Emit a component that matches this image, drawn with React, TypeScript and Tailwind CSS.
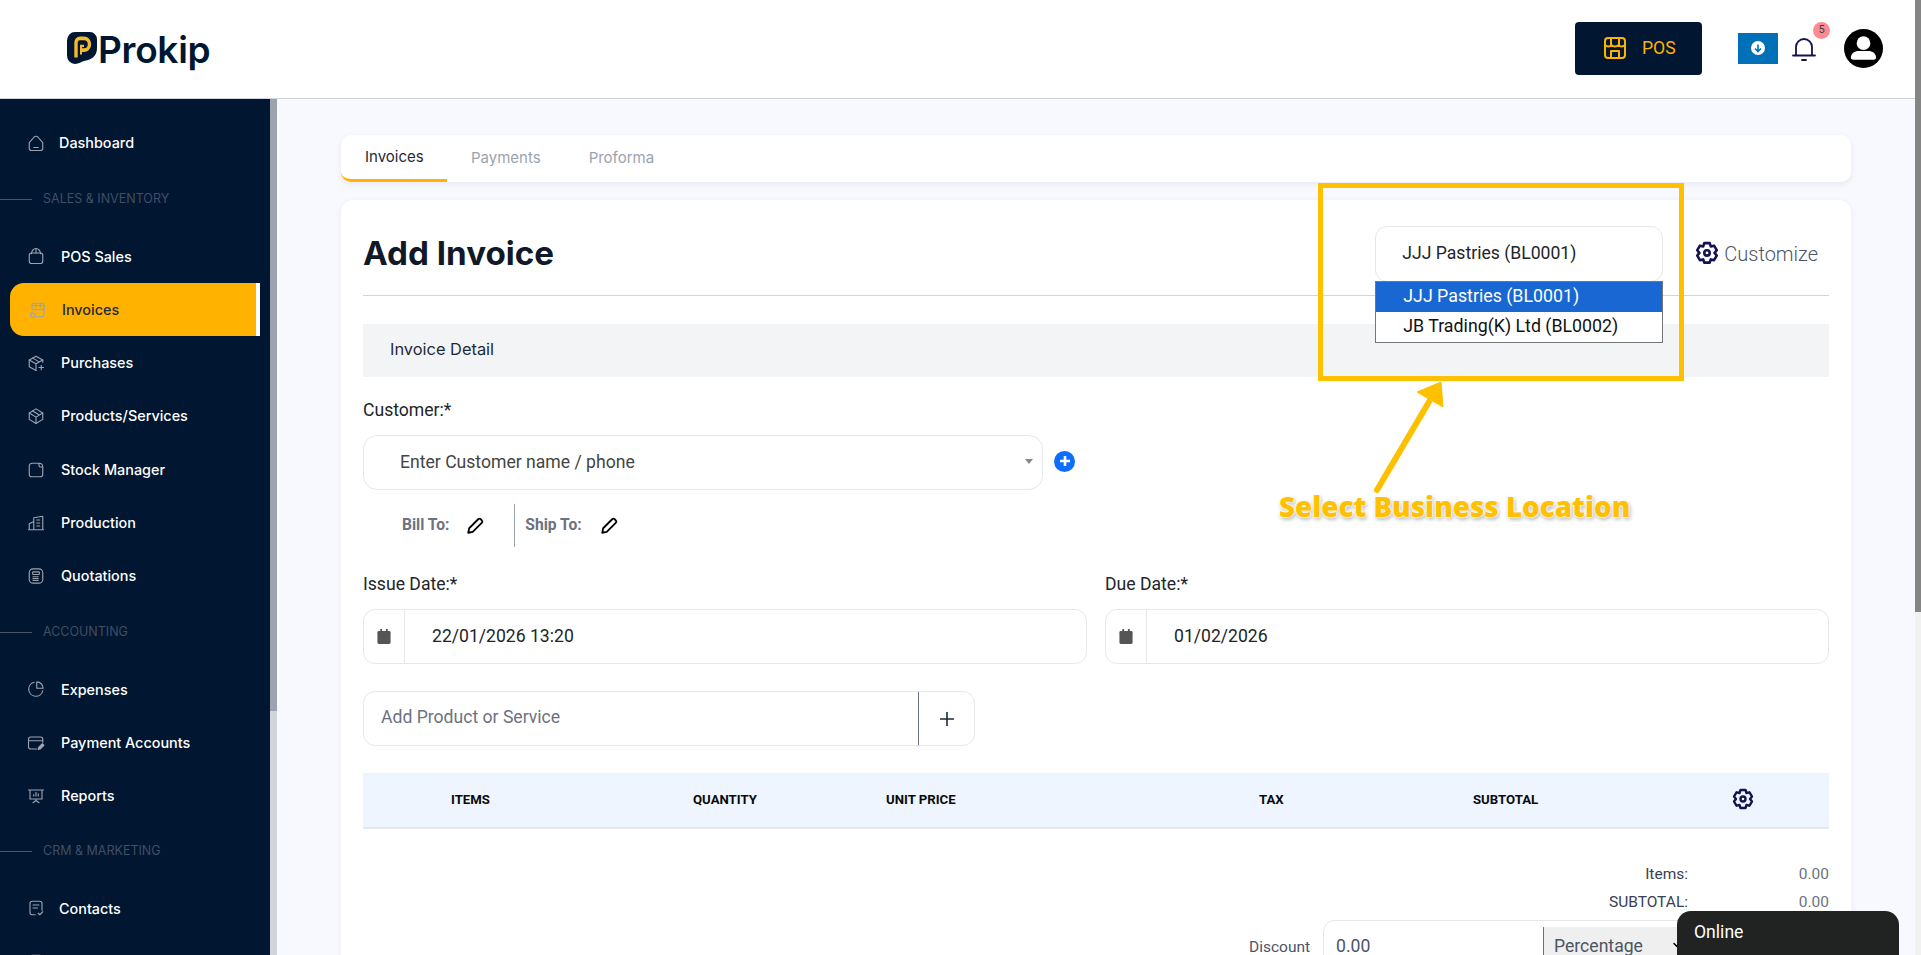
import type { ReactNode } from 'react';
import { ChevronDown } from 'lucide-react';

const line = 'fill-none stroke-current stroke-[1.5]';

function Glyph({ children, className = '' }: { children: ReactNode; className?: string }) {
  return (
    <svg viewBox="0 0 24 24" className={`h-[18px] w-[18px] shrink-0 ${line} ${className}`} strokeLinecap="round" strokeLinejoin="round">
      {children}
    </svg>
  );
}

const icons: Record<string, ReactNode> = {
  home: (
    <>
      <path d="M3 11.5 9.5 4a3.5 3.5 0 0 1 5 0L21 11.5V19a3 3 0 0 1-3 3H6a3 3 0 0 1-3-3z" />
      <path d="M9 18h6" />
    </>
  ),
  bag: (
    <>
      <path d="M3 11a3 3 0 0 1 3-3h12a3 3 0 0 1 3 3v8a3 3 0 0 1-3 3H6a3 3 0 0 1-3-3z" />
      <path d="M6 9c0-4 3-7 6-7s6 3 6 7" />
      <path d="M12 2v6" />
    </>
  ),
  shop: (
    <>
      <path d="M4 6a3 3 0 0 1 3-3h10a3 3 0 0 1 3 3v12a3 3 0 0 1-3 3H9" />
      <path d="M4 9V6h16v4a2.5 2.5 0 0 1-4 1 2.5 2.5 0 0 1-4 0 2.5 2.5 0 0 1-4 0 2.5 2.5 0 0 1-4-1" />
      <path d="M9 3v6M15 3v6M4 14v2" />
      <circle cx="5" cy="19" r="3" />
    </>
  ),
  boxPlus: (
    <>
      <path d="M21 11V8l-9-5-9 5v9l9 5" />
      <path d="M3 8l9 5 9-5M12 13v9M7.5 5.5l9 5" />
      <path d="M19 15v6M16 18h6" />
    </>
  ),
  box: (
    <>
      <path d="M21 8v8.5L12 22l-9-5.5V8l9-5.5z" />
      <path d="M3 8l9 5.5L21 8M12 13.5V22M7.5 5.2l9 5.5" />
    </>
  ),
  folder: <path d="M3 7a4 4 0 0 1 4-4h9v3a2 2 0 0 0 2 2h3v10a3 3 0 0 1-3 3H6a3 3 0 0 1-3-3z M16 3c3 0 5 2 5 5" />,
  building: (
    <>
      <path d="M2 21h20M3 21v-8l6-3M9 21V5l12-2v18" />
      <path d="M13 8h4M13 12h4M13 16h4" />
    </>
  ),
  calc: (
    <>
      <rect x="3" y="2.5" width="18" height="19" rx="5" />
      <rect x="7.5" y="6.5" width="9" height="3.5" rx="1" />
      <path d="M8 13h8M8 15.5h8M8 18h8" strokeDasharray="1.5 1.2" />
    </>
  ),
  pie: (
    <>
      <path d="M21 14.5A9.5 9.5 0 1 1 9.5 3" />
      <path d="M13 2.5a8.5 8.5 0 0 1 8.5 8.5H13z" />
    </>
  ),
  card: (
    <>
      <path d="M21 11V7a3 3 0 0 0-3-3H5a3 3 0 0 0-3 3v10a3 3 0 0 0 3 3h8" />
      <path d="M2 9h19" />
      <path d="M15 20.5l.5-2.5 5-5 2 2-5 5z" className="fill-current" />
    </>
  ),
  report: (
    <>
      <path d="M2 4h20M4 4v12h16V4M12 16v2M8 21l4-3 4 3" />
      <path d="M9 12v-2M12 12V7M15 12V9" />
    </>
  ),
  note: (
    <>
      <path d="M11 21H7a3 3 0 0 1-3-3V6a3 3 0 0 1 3-3h10a3 3 0 0 1 3 3v9" />
      <path d="M8 8h8M8 12h6M15 19l2 2 4-4" />
    </>
  ),
};

type NavRow =
  | { kind: 'link'; label: string; icon: string; gap: string }
  | { kind: 'section'; label: string; height: string };

const navRows: NavRow[] = [
  { kind: 'link', label: 'Dashboard', icon: 'home', gap: 'ml-[14px]' },
  { kind: 'section', label: 'SALES & INVENTORY', height: 'h-[60px]' },
  { kind: 'link', label: 'POS Sales', icon: 'bag', gap: 'ml-[16px]' },
  { kind: 'link', label: 'Invoices', icon: 'shop', gap: 'ml-[15px]' },
  { kind: 'link', label: 'Purchases', icon: 'boxPlus', gap: 'ml-[16px]' },
  { kind: 'link', label: 'Products/Services', icon: 'box', gap: 'ml-[16px]' },
  { kind: 'link', label: 'Stock Manager', icon: 'folder', gap: 'ml-[16px]' },
  { kind: 'link', label: 'Production', icon: 'building', gap: 'ml-[16px]' },
  { kind: 'link', label: 'Quotations', icon: 'calc', gap: 'ml-[16px]' },
  { kind: 'section', label: 'ACCOUNTING', height: 'h-[60px]' },
  { kind: 'link', label: 'Expenses', icon: 'pie', gap: 'ml-[16px]' },
  { kind: 'link', label: 'Payment Accounts', icon: 'card', gap: 'ml-[16px]' },
  { kind: 'link', label: 'Reports', icon: 'report', gap: 'ml-[16px]' },
  { kind: 'section', label: 'CRM & MARKETING', height: 'h-[59px]' },
  { kind: 'link', label: 'Contacts', icon: 'note', gap: 'ml-[14px]' },
  { kind: 'link', label: '', icon: 'note', gap: 'ml-[14px]' },
];

function Sidebar() {
  return (
    <aside className="w-[270px] shrink-0 overflow-hidden bg-[#001631] pt-[17.4px]">
      {navRows.map((row) =>
        row.kind === 'section' ? (
          <div key={row.label} className={`flex ${row.height} items-center gap-[11px] pb-[1px]`}>
            <span className="h-px w-[32px] bg-[#4b5563]" />
            <span className="text-[12.5px] text-[#414e63]">{row.label}</span>
          </div>
        ) : row.label === 'Invoices' ? (
          <div key={row.label} className="ml-[10px] flex h-[53.3px] w-[250px] items-center rounded-l-[14px] border-r-4 border-white bg-[#ffb300] pl-[19px]">
            <Glyph className="text-[#9ca3af]">{icons[row.icon]}</Glyph>
            <span className={`${row.gap} text-[14.4px] font-medium text-[#1f2937]`}>{row.label}</span>
          </div>
        ) : (
          <div key={row.label} className="flex h-[53.3px] items-center pl-[27px]">
            <Glyph className="text-[#9ca3af]">{icons[row.icon]}</Glyph>
            <span className={`${row.gap} text-[14.4px] font-medium text-white`}>{row.label}</span>
          </div>
        ),
      )}
    </aside>
  );
}

function Header() {
  return (
    <header className="flex h-[99px] shrink-0 items-center border-b border-[#d1d5db] bg-white pb-[2px] pl-[67px] pr-[32px]">
      <svg viewBox="0 0 30 30" preserveAspectRatio="none" className="h-[32px] w-[30px]">
        <path d="M8 0h15a7 7 0 0 1 7 7v8c0 8-6 11-12 12-4 .8-6 3-10 3a8 8 0 0 1-8-8V8a8 8 0 0 1 8-8z" fill="#001631" />
        <path d="M9 24V10a4 4 0 0 1 4-4h4a5.5 5.5 0 0 1 0 11h-3" fill="none" stroke="#f5b82e" strokeWidth="3.4" />
        <path d="M14 21v-8h3" fill="none" stroke="#f5b82e" strokeWidth="2" />
      </svg>
      <span className="ml-[1px] mt-[3px] font-['Inter'] text-[37px] font-semibold tracking-[-0.3px] text-[#001631]">Prokip</span>

      <button className="ml-auto flex h-[53px] w-[127px] items-center rounded-[4px] bg-[#001631] pl-[28px] font-['Roboto'] text-[17.6px] text-[#ffb300]">
        <svg viewBox="0 0 24 24" className="h-[24px] w-[24px] fill-none stroke-current stroke-2" strokeLinejoin="round">
          <rect x="2" y="2" width="20" height="20" rx="3" />
          <path d="M2 9c2 2 5 2 6.500 0 1.500 2 5.500 2 7 0 1.500 2 4.500 2 6.500 0" />
          <path d="M8 3v6M16 3v6M8 22v-7h8v7" />
        </svg>
        <span className="ml-[15px]">POS</span>
      </button>

      <div className="ml-[36px] flex h-[31px] w-[40px] items-center justify-center bg-[#0071b8]">
        <span className="flex h-[14px] w-[14px] items-center justify-center rounded-full bg-white">
          <svg viewBox="0 0 10 10" className="h-[10px] w-[10px] fill-none stroke-[#0071b8] stroke-[1.6]">
            <path d="M5 1.500v6.500M2 5.500l3 3 3-3" />
          </svg>
        </span>
      </div>

      <div className="relative ml-[14px] h-[24px] w-[24px]">
        <svg viewBox="0 0 24 24" className="h-[26px] w-[24px] fill-none stroke-[#14124f] stroke-[1.8]" strokeLinecap="round">
          <path d="M1 18.500h22M4 18.500V10a8 8 0 0 1 16 0v8.500" />
          <path d="M10 23h4" />
        </svg>
        <span className="absolute left-[21px] top-[-14px] flex h-[17px] w-[17px] items-center justify-center rounded-full bg-[#ff8a8f] font-['Roboto'] text-[11px] text-[#374151]">
          5
        </span>
      </div>

      <svg viewBox="0 0 40 40" className="ml-[28px] h-[39px] w-[39px]">
        <circle cx="20" cy="20" r="20" fill="#000" />
        <circle cx="20" cy="14.500" r="7" fill="#fff" />
        <path d="M7 30c0-5 4-7.500 8-7.500h10c4 0 8 2.500 8 7.500a3 3 0 0 1-3 1.500H10A3 3 0 0 1 7 30z" fill="#fff" />
      </svg>
    </header>
  );
}

function Gear({ className }: { className: string }) {
  return (
    <svg viewBox="0 0 24 24" className={`fill-none stroke-[#14124f] stroke-[2.4] ${className}`} strokeLinejoin="round">
      <path d="M9.500 2h5l1 3 3-.7 2.500 4.200-2 2.500 2 2.500-2.500 4.200-3-.7-1 3h-5l-1-3-3 .7L3 13.500 5 11 3 8.500l2.500-4.200 3 .7z" />
      <circle cx="12" cy="11" r="2.500" />
    </svg>
  );
}

function Pencil() {
  return (
    <svg viewBox="0 0 20 20" className="h-[18px] w-[18px] fill-none stroke-black stroke-2" strokeLinejoin="round">
      <path d="M2.500 17.500l1-5L13.500 2.500a2 2 0 0 1 2.800 0l1.200 1.200a2 2 0 0 1 0 2.800L7.500 16.500z" />
    </svg>
  );
}

function Calendar() {
  return (
    <svg viewBox="0 0 14 16" className="h-[15px] w-[14px] fill-[#555]">
      <rect x="3" y="0" width="2" height="4" />
      <rect x="9" y="0" width="2" height="4" />
      <rect x="0" y="2" width="14" height="14" rx="1.500" />
    </svg>
  );
}

function DateField({ label, value }: { label: string; value: string }) {
  return (
    <div className="min-w-0 flex-1">
      <div className="h-[24px] text-[17.6px] leading-[24px] text-[#212529]">{label}</div>
      <div className="mt-[13px] flex h-[55px] overflow-hidden rounded-[12px] border border-[#e5e7eb]">
        <div className="flex w-[41px] items-center justify-center border-r border-[#e5e7eb]">
          <Calendar />
        </div>
        <div className="flex items-center pl-[27px] text-[17.6px] text-[#212529]">{value}</div>
      </div>
    </div>
  );
}

function InvoiceCard() {
  return (
    <section className="rounded-t-[12px] bg-white px-[22px] font-['Roboto'] shadow-[0_1px_6px_rgba(30,41,80,0.06)]">
      <div className="flex h-[96px] items-center border-b border-[#d4d4d4] pt-[12px]">
        <h1 className="font-['Inter'] text-[33.2px] font-bold text-[#111827]">Add Invoice</h1>
        <div className="relative ml-auto h-[56px] w-[288px] rounded-[12px] border border-[#e5e7eb] bg-white">
          <div className="flex h-full items-center pl-[26px] text-[17.6px] text-[#212529]">JJJ Pastries (BL0001)</div>
          <ul className="absolute left-[-1px] top-[54px] z-10 w-[288px] border border-[#767676] bg-white text-[17.8px] text-[#111]">
            <li className="flex h-[30px] items-center bg-[#1967d2] pl-[27px] text-white">JJJ Pastries (BL0001)</li>
            <li className="flex h-[30px] items-center pl-[27px]">JB Trading(K) Ltd (BL0002)</li>
          </ul>
        </div>
        <div className="ml-[31px] flex items-center pr-[11px]">
          <Gear className="h-[26px] w-[26px]" />
          <span className="ml-[4px] text-[20px] font-light text-[#4b5563]">Customize</span>
        </div>
      </div>

      <div className="mt-[28px] flex h-[53px] items-center bg-[#f3f4f6] pb-[3px] pl-[27px] font-['Inter'] text-[16.4px] text-[#1f2937]">Invoice Detail</div>

      <div className="mt-[21px] h-[24px] text-[17.6px] leading-[24px] text-[#212529]">Customer:*</div>
      <div className="mt-[13px] flex items-center">
        <div className="flex h-[55px] w-[680px] items-center rounded-[14px] border border-[#e5e7eb] pl-[36px] pr-[9px] text-[17.6px] text-[#444]">
          Enter Customer name / phone
          <span className="mb-[3px] ml-auto h-0 w-0 border-x-[4px] border-t-[5px] border-x-transparent border-t-[#888]" />
        </div>
        <span className="mb-[3px] ml-[11px] flex h-[21px] w-[21px] items-center justify-center rounded-full bg-[#0d6efd]">
          <svg viewBox="0 0 12 12" className="h-[12px] w-[12px] stroke-white stroke-[2.6]">
            <path d="M6 1v10M1 6h10" />
          </svg>
        </span>
      </div>

      <div className="mt-[14px] flex h-[43px] items-center pl-[39px] text-[15.6px] font-bold text-[#6b7280]">
        <span>Bill To:</span>
        <span className="ml-[17px]">
          <Pencil />
        </span>
        <span className="ml-[30px] h-[43px] w-px bg-[#9ca3af]" />
        <span className="ml-[10px]">Ship To:</span>
        <span className="ml-[18px]">
          <Pencil />
        </span>
      </div>

      <div className="mt-[25px] flex gap-[18px]">
        <DateField label="Issue Date:*" value="22/01/2026 13:20" />
        <DateField label="Due Date:*" value="01/02/2026" />
      </div>

      <div className="mt-[27px] flex h-[55px] w-[612px] items-center rounded-[12px] border border-[#e5e7eb] text-[17.6px] text-[#6b7280]">
        <span className="flex-1 pb-[2px] pl-[17px]">Add Product or Service</span>
        <span className="flex h-full w-[56px] items-center justify-center border-l border-[#6b7280]">
          <svg viewBox="0 0 16 16" className="h-[16px] w-[16px] stroke-[#1e293b] stroke-[1.6]">
            <path d="M8 1v14M1 8h14" />
          </svg>
        </span>
      </div>

      <div className="mt-[27px] grid h-[56px] grid-cols-[242px_193px_373px_214px_258px_1fr] items-center border-b-2 border-[#e5e7eb] bg-[#eef5ff] pl-[88px] text-[13.2px] font-bold text-[#0a0a0a]">
        <span>ITEMS</span>
        <span>QUANTITY</span>
        <span>UNIT PRICE</span>
        <span>TAX</span>
        <span>SUBTOTAL</span>
        <Gear className="h-[24px] w-[24px]" />
      </div>

      <div className="mt-[32px] text-[15.5px] text-[#374151]">
        <div className="flex h-[28px] items-center justify-end">
          <span>Items:</span>
          <span className="w-[141px] text-right text-[#6b7280]">0.00</span>
        </div>
        <div className="flex h-[28px] items-center justify-end">
          <span>SUBTOTAL:</span>
          <span className="w-[141px] text-right text-[#6b7280]">0.00</span>
        </div>
        <div className="mt-[3px] flex items-start pl-[886px]">
          <span className="mt-[16px] w-[74px] text-[#4b5563]">Discount</span>
          <div className="flex h-[55px] w-[400px] rounded-[12px] border border-[#e5e7eb] text-[17.6px]">
            <span className="w-[219px] pl-[12px] pt-[12px] text-[#4b5563]">0.00</span>
            <span className="mt-[6px] flex h-[48px] flex-1 items-start gap-[28px] border-l border-[#6b7280] bg-[#efefef] pl-[10px] pt-[6px] text-[#4b5563]">
              Percentage
              <ChevronDown className="mt-[6px] h-[12px] w-[12px] text-black" strokeWidth={3} />
            </span>
          </div>
        </div>
      </div>
    </section>
  );
}

export default function App() {
  return (
    <div className="relative flex h-screen w-full overflow-hidden bg-white font-['Inter',sans-serif]">
      <div className="flex min-w-0 flex-1 flex-col">
        <Header />
        <div className="flex min-h-0 flex-1">
          <Sidebar />
          <div className="w-[7px] shrink-0 bg-[#d1d5db]">
            <div className="h-[612px] bg-[#9ca3af]" />
          </div>
          <main className="min-w-0 flex-1 overflow-hidden bg-[#f8f9fe] px-[64px] pt-[36px]">
            <nav className="flex h-[47px] items-start rounded-[10px] bg-white text-[15px] shadow-[0_2px_6px_rgba(30,41,80,0.08)]">
              <span className="h-[47px] w-[106px] rounded-bl-[10px] border-b-[3px] border-[#ffb300] pl-[24px] pt-[11px] text-[#1f2937]">Invoices</span>
              <span className="ml-[24px] pt-[12px] text-[#9ca3af]">Payments</span>
              <span className="ml-[48px] pt-[12px] text-[#9ca3af]">Proforma</span>
            </nav>
            <div className="mt-[18px]">
              <InvoiceCard />
            </div>
          </main>
        </div>
      </div>
      <div className="w-[6px] shrink-0 bg-[#f1f1f1]">
        <div className="h-[612px] bg-[#858585]" />
      </div>

      {/* annotation drawn over the screenshot */}
      <div className="pointer-events-none absolute left-[1318px] top-[183px] h-[198px] w-[366px] border-[5px] border-[#ffc000]" />
      <svg className="pointer-events-none absolute left-[1360px] top-[375px] h-[125px] w-[100px] fill-[#ffc000] stroke-[#ffc000]" viewBox="0 0 100 125">
        <path d="M17 115 73 20" strokeWidth="6" strokeLinecap="round" />
        <path d="M57 17 81 7 83 32z" strokeWidth="1" />
      </svg>
      <span className="pointer-events-none absolute left-[1279px] top-[487px] font-['Open_Sans'] text-[27.8px] font-extrabold leading-[38px] text-[#ffc000] [text-shadow:0_0_2px_#fff,0_0_2px_#fff,0_0_3px_#fff,1px_2px_4px_rgba(0,0,0,0.4)]">
        Select Business Location
      </span>

      <div className="absolute bottom-0 left-[1677px] h-[44px] w-[222px] rounded-t-[14px] bg-[#212322] pl-[17px] pt-[8px] font-['Roboto'] text-[17.6px] text-white">
        Online
      </div>
    </div>
  );
}
